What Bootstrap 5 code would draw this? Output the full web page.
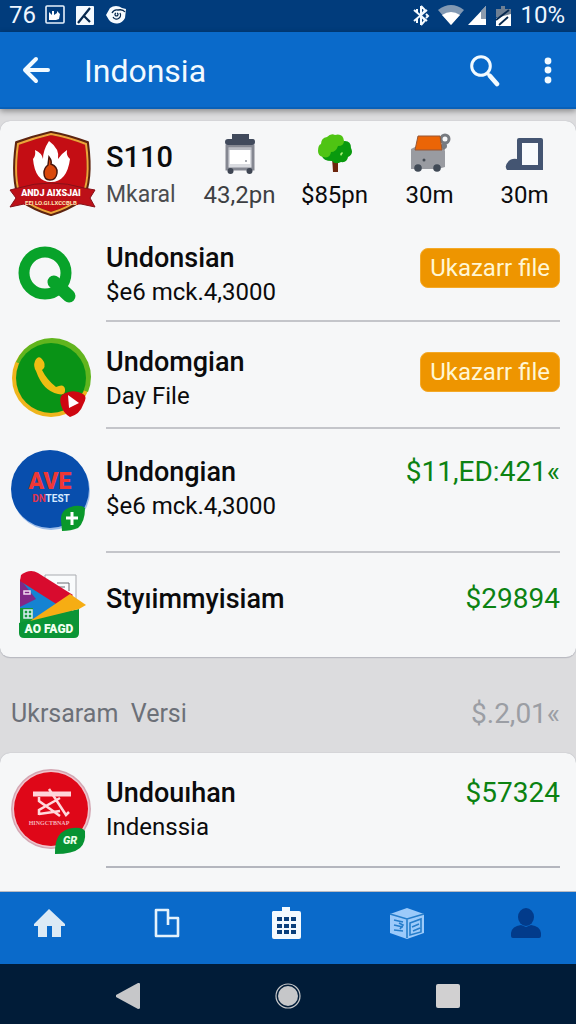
<!DOCTYPE html>
<html lang="id">
<head>
<meta charset="utf-8">
<meta name="viewport" content="width=device-width, initial-scale=1">
<title>Indonsia</title>
<link href="https://cdn.jsdelivr.net/npm/bootstrap@5.3.0/dist/css/bootstrap.min.css" rel="stylesheet">
<style>
body{font-family:Roboto,"Liberation Sans",sans-serif;background:#dcdcde;color:#0b0b0c}
svg{display:block;flex:none}
.status-bar{background:#013c7c;color:#eef6ff;height:32px;font-size:24px;line-height:28px;padding:0 11px 2px 9px}
.app-bar{background:#0a6aca;height:77px;padding:0 14px 0 20px;border-bottom:2px solid #0860b8;box-shadow:0 2px 6px rgba(0,0,0,.4);z-index:1}
.app-bar h1{font-size:32px;line-height:40px;color:#f2faff;font-weight:400;margin-left:32px;padding-top:2px}
.icon-btn{background:none;border:0;padding:0;color:#f2faff}
.panel{background:#f6f7f8;border:0;border-bottom:1px solid #babbc2;border-radius:10px;box-shadow:0 0 1px #9a9ca6}
.panel-last{border-radius:10px 10px 0 0}
.avatar-col{width:106px;flex:none;padding-left:8px}
.avatar-col svg{overflow:visible}
.summary{height:101px;padding-right:4px}
.summary-text{width:86px;flex:none;padding-top:16px}
.stat{font-size:24px;line-height:32px;padding-top:11px}
.stat-soft{color:#3d3f43}
.amount-id{font-size:29px;line-height:40px;font-weight:500}
.sub-id{font-size:23px;line-height:36px;color:#4c4d50}
.entry-body{margin-right:16px;border-bottom:2px solid #c4c5ca}
.entry:last-child .entry-body{border-bottom:0}
.short-row{height:100px}.mid-row{height:107px}.tall-row{height:124px}.end-row{height:104px}.last-row{height:115px}
.short-row .entry-body{padding-top:19px}
.mid-row .entry-body{padding-top:23px}
.tall-row .entry-body{padding-top:26px}
.end-row .entry-body{padding-top:29px}
.panel-last .last-row .entry-body{padding-top:23px;border-bottom:2px solid #b4b6be}
.entry-name{font-size:27px;line-height:34px;font-weight:500}
.entry-sub{font-size:24px;line-height:34px}
.price{font-size:28px;line-height:34px;color:#0c8212}
.file-btn{background:#ee9500;color:#fff6d4;border:1px solid #f4a928;border-radius:8px;font-size:24px;line-height:36px;padding:1px 9px;margin-top:7px}
.file-btn:hover{background:#dc8a00;color:#fff6d4}
.section-label{height:95px;padding:16px 16px 0 11px;font-size:25px;line-height:34px;color:#6c7078}
.muted-price{font-size:28px;color:#9b9ea4}
.tab-bar{background:#0a6aca;height:72px;padding:0 26px 10px}
.sys-bar{background:#011c38;height:60px;padding:4px 48px 0}
</style>
</head>
<body>
<div class="d-flex flex-column min-vh-100">
<div class="status-bar d-flex align-items-center">
  <span>76</span>
  <svg class="ms-2" width="24" height="22" viewBox="0 0 24 22"><rect x="2" y="2" width="18" height="17" rx="1" fill="none" stroke="#e6f1fb" stroke-width="1.6"/><path d="M5 8l3 3V7h2v4l3-2V7l3 3-1 5-3 1H5z" fill="#fff"/></svg>
  <svg class="ms-2 me-1" width="18" height="19" viewBox="0 0 18 19"><rect width="18" height="19" rx="1" fill="#f4faff"/><path d="M2 17L14 2M8 10l6 6" stroke="#06284e" stroke-width="2.2" fill="none"/></svg>
  <svg class="ms-2" width="20" height="20" viewBox="0 0 20 20"><path d="M0 10L4 3a10 10 0 0 1 12 0l4 1-1 9a9.5 9.5 0 0 1-16 2z" fill="#f6fbff"/><path d="M6 8q2-4 6-3 5-1 7 2M7 12a4 4 0 0 0 7-4M10 8a1.500 1.500 0 1 0 1 0" fill="none" stroke="#06284e" stroke-width="1.300"/></svg>
  <svg class="ms-auto" width="18" height="21" viewBox="0 0 18 21"><path d="M2 5l13 11M2 16L15 5M9 1v19M9 1l4 4-4 5.500 4 5L9 20M5 4v3M5 14v4M14 9l2 2-2 2" fill="none" stroke="#f4faff" stroke-width="2"/></svg>
  <svg class="ms-2 ps-0" width="26" height="20" viewBox="0 0 26 20"><path d="M0 5q13-10 26 0L13 20z" fill="#8299b3"/><path d="M4 10q9-6 18 0l-9 10z" fill="#fff"/></svg>
  <svg class="ms-1" width="19" height="20" viewBox="0 0 19 20"><path d="M0 20L18 1v19z" fill="#fff"/><path d="M13 6l5-5v13h-5z" fill="#8d9cae"/></svg>
  <svg class="ms-2 me-2" width="17" height="21" viewBox="0 0 17 21"><path d="M1 4h5V1h4v3h6v8H1z" fill="#6e7f93"/><path d="M1 13L16 9v12H1z" fill="#fff"/><path d="M1 15L14 5M4 20l9-8" stroke="#06284e" stroke-width="1.800"/></svg>
  <span>10%</span>
</div>
<header class="app-bar d-flex align-items-center position-relative">
  <button class="icon-btn" aria-label="Kembali"><svg width="32" height="32" viewBox="0 0 32 32"><path d="M28 16H5M16 5L5 16l11 11" fill="none" stroke="currentColor" stroke-width="4" stroke-linecap="round" stroke-linejoin="round"/></svg></button>
  <h1 class="mb-0">Indonsia</h1>
  <button class="icon-btn ms-auto" aria-label="Cari"><svg width="32" height="34" viewBox="0 0 32 34"><circle cx="11" cy="13" r="9.300" fill="none" stroke="currentColor" stroke-width="3"/><path d="M17 20l3 3" stroke="currentColor" stroke-width="3"/><path d="M20 23l7 8" stroke="currentColor" stroke-width="4.600" stroke-linecap="round"/></svg></button>
  <button class="icon-btn ms-4 ps-2" aria-label="Menu"><svg width="28" height="32" viewBox="0 0 28 32"><g fill="currentColor"><circle cx="14" cy="7" r="3.400"/><circle cx="14" cy="16" r="3.400"/><circle cx="14" cy="26" r="3.400"/></g></svg></button>
</header>
<main class="flex-grow-1 d-flex flex-column pt-2">
<section class="panel mt-1">
  <div class="summary d-flex">
    <div class="avatar-col pt-2"><svg width="90" height="88" viewBox="0 0 90 88"><path d="M43 4Q60 7 79 14Q84 52 74 70Q60 80 43 85Q26 80 12 70Q4 50 9 14Q26 8 43 4z" fill="#c40d14" stroke="#5d2410" stroke-width="4"/><path d="M43 5Q60 8 78 15Q83 52 73 69Q60 79 43 84Q26 79 13 69Q5 50 10 15Q26 9 43 5z" fill="none" stroke="#eea43a" stroke-width="2"/><path d="M41 12q11 8 9 18 3-5 9-9-1 6 3 9-3 23-19 23T25 30q3-3 2-9 7 3 8 9 0-9 6-18z" fill="#fff"/><path d="M41 28q3 4 2 7 7 3 6 9-1 7-7 7t-6-7q0-5 4-8z" fill="#d9480c" stroke="#49150b" stroke-width="1.500"/><path d="M2 61l8-2q33-10 66 0l11 2-5 8 5 9-14-3H16L2 78l6-9z" fill="#bd1018" stroke="#861018"/><path d="M15 70h56l-1 6H16z" fill="#bd1018"/><text x="43" y="67" text-anchor="middle" font-size="9" font-weight="900" fill="#fff">ANDJ AIXSJAI</text><text x="43" y="76" text-anchor="middle" font-size="6" font-weight="700" fill="#ffe6b0">EEI LO.GI.LXCCBLB</text></svg></div>
    <div class="summary-text"><div class="amount-id">S110</div><div class="sub-id">Mkaral</div></div>
    <div class="row row-cols-4 g-0 flex-grow-1 text-center">
      <div class="col stat d-flex flex-column align-items-center"><svg class="mb-1" width="32" height="43" viewBox="0 0 32 43"><path d="M3 14h26v23H3z" fill="#d9dbe0" stroke="#858892" stroke-width="3"/><path d="M6 18h20v14H6z" fill="#fff"/><path d="M4 17h24" stroke="#9c9fa8"/><circle cx="22" cy="29" r="1" fill="#8d929b"/><path d="M8 2h17v5h4q2 0 2 3t-3 3H4q-3 0-3-3t3-3h4z" fill="#414a5c"/><circle cx="6.500" cy="39" r="3" fill="#3f4653"/><circle cx="25.500" cy="39" r="3" fill="#3f4653"/></svg><span class="stat-soft">43,2pn</span></div>
      <div class="col stat d-flex flex-column align-items-center"><svg class="mb-1" width="36" height="43" viewBox="0 0 36 43"><path d="M15 25h6v15h-5z" fill="#6d260d"/><path d="M28 9q6 0 6 7 3 6-3 9-1 6-7 5-6 3-9-1-9 0-10-5 4-14 23-15z" fill="#099a0e"/><path d="M1 19q0-6 3-7 0-6 6-7 4-4 8-2 8-2 9 6 0 5-6 5-2 6-7 6-1 7-8 5-5-1-5-6z" fill="#4fc413"/><path d="M23 22l2-2 1 1-2 3z" fill="#a9f177"/></svg>$85pn</div>
      <div class="col stat d-flex flex-column align-items-center"><svg class="mb-1" width="44" height="43" viewBox="0 0 44 43"><path d="M36 13l-3 10" stroke="#73767c" stroke-width="4"/><circle cx="37" cy="7" r="4" fill="none" stroke="#777b81" stroke-width="3"/><circle cx="36" cy="14" r="3" fill="#777b81"/><path d="M3 17l4-2 27 1 3 3v16l-7 2H3z" fill="#999ba1"/><path d="M10 4h22l2 14H7z" fill="#eb6506" stroke="#965736"/><circle cx="16" cy="28" r="1.500" fill="#444a53"/><circle cx="10" cy="36" r="3.800" fill="#414a56"/><circle cx="29" cy="36" r="3.800" fill="#414a56"/></svg>30m</div>
      <div class="col stat d-flex flex-column align-items-center"><svg class="mb-1" width="40" height="43" viewBox="0 0 40 43"><path d="M14 6h22q2 0 2 2v30H2q-3-4 1-8 3-4 9-3V8q0-2 2-2z" fill="#445572"/><path d="M17 11h16v22H17z" fill="#f8fbfd"/></svg>30m</div>
    </div>
  </div>
  <div class="entry d-flex short-row">
    <div class="avatar-col d-flex align-items-center"><svg width="80" height="80" viewBox="0 0 80 80"><circle cx="37" cy="41" r="21" fill="none" stroke="#08a32a" stroke-width="11"/><path d="M46 50l15 14" stroke="#08a32a" stroke-width="13" stroke-linecap="round"/></svg></div>
    <div class="entry-body flex-grow-1 d-flex justify-content-between align-items-start"><div><div class="entry-name">Undonsian</div><div class="entry-sub">$e6 mck.4,3000</div></div><button class="btn file-btn">Ukazarr file</button></div>
  </div>
  <div class="entry d-flex mid-row">
    <div class="avatar-col d-flex align-items-center"><svg width="86" height="82" viewBox="0 0 86 82"><circle cx="43" cy="43" r="39" fill="#efb51d"/><path d="M8 27A39 39 0 1 1 80 57L43 43z" fill="#61b51e"/><circle cx="43" cy="43" r="35" fill="#099316"/><path d="M27 26q4-8 9 1 2 5-2 8 5 10 14 17 8-4 9 2 1 7-7 5-15-3-22-23-3-5-1-10z" fill="#efbd13"/><path d="M54 60q11-7 21-1 5 2 0 11-3 9-13 12-7-4-9-12-2-7 1-10z" fill="#ce0711"/><path d="M60 60l11 8-10 5z" fill="#fff"/></svg></div>
    <div class="entry-body flex-grow-1 d-flex justify-content-between align-items-start"><div><div class="entry-name">Undomgian</div><div class="entry-sub">Day File</div></div><button class="btn file-btn">Ukazarr file</button></div>
  </div>
  <div class="entry d-flex tall-row">
    <div class="avatar-col d-flex align-items-center"><svg width="86" height="86" viewBox="0 0 86 86"><circle cx="43" cy="43" r="39" fill="#9cbce9"/><circle cx="42" cy="41" r="39" fill="#084ead"/><text x="42" y="41" text-anchor="middle" font-family="Roboto" font-size="23" font-weight="900" fill="#ed3835">AVE</text><text x="43" y="54" text-anchor="middle" font-family="Roboto" font-size="10" font-weight="700" fill="#d7e9ff"><tspan fill="#e23450">DN</tspan>TEST</text><path d="M77 60q-3-3-11-2-14 3-13 14l1 11q9 0 16-3 7-6 7-20z" fill="#0a982b"/><path d="M64 64v13M58 70h12" stroke="#fff" stroke-width="3"/></svg></div>
    <div class="entry-body flex-grow-1 d-flex justify-content-between align-items-start"><div><div class="entry-name">Undongian</div><div class="entry-sub">$e6 mck.4,3000</div></div><span class="price">$11,ED:421«</span></div>
  </div>
  <div class="entry d-flex end-row">
    <div class="avatar-col d-flex align-items-center"><svg width="80" height="68" viewBox="0 0 80 68"><path d="M37 4h31v32H37z" fill="#f9fbfc" stroke="#a9abb0"/><path d="M49 12h12v8M51 16h6" fill="none" stroke="#686b70"/><path d="M12 10l52 20v12L24 54 12 45z" fill="#1583d2"/><path d="M12 8l16 20-16 8z" fill="#812887"/><path d="M12 37h13v20H12z" fill="#139a38"/><path d="M71 38v24q0 5-5 5H16q-5 0-5-5V52l14-4z" fill="#0b9536"/><path d="M13 4Q22-3 30 2l35 22-12 12L12 10z" fill="#d80b2e"/><path d="M62 23l16 11-7 4-49 12z" fill="#f6ad13"/><path d="M16 20h6v3h-6z" fill="none" stroke="#f1d9f0" stroke-width="1.500"/><path d="M16 39h8v8h-8zM20 39v8M16 43h8" fill="none" stroke="#d9edf1" stroke-width="1.500"/><text x="41" y="62" text-anchor="middle" font-family="Roboto" font-size="12" font-weight="900" fill="#f2fff1">AO FAGD</text></svg></div>
    <div class="entry-body flex-grow-1 d-flex justify-content-between align-items-start"><div class="entry-name">Styıimmyisiam</div><span class="price">$29894</span></div>
  </div>
</section>
<div class="section-label d-flex justify-content-between align-items-center pt-3"><span>Ukrsaram&nbsp; Versi</span><span class="muted-price">$.2,01«</span></div>
<section class="panel panel-last flex-grow-1">
  <div class="entry d-flex last-row">
    <div class="avatar-col d-flex align-items-center"><svg width="86" height="88" viewBox="0 0 86 88"><circle cx="43" cy="42" r="40" fill="#d3a7b3"/><circle cx="43" cy="42" r="38.500" fill="#f0c5cd"/><circle cx="43" cy="42" r="37" fill="#df0718"/><path d="M25 27h38" stroke="#ffd5da" stroke-width="5"/><path d="M31 30v4l21 15M52 31L31 43v5M41 22l17 26 3-3M31 47l21-3" fill="none" stroke="#ffd9dc" stroke-width="2.500"/><text x="41" y="58" text-anchor="middle" font-family="Liberation Serif" font-size="6" font-weight="700" fill="#f4b2ba">HINGCTBNAP</text><path d="M77 64q-3-4-12-3-19 2-18 26 18 0 25-6 6-5 5-17z" fill="#079333"/><text x="62" y="77" text-anchor="middle" font-family="Roboto" font-size="11" font-style="italic" font-weight="900" fill="#e8ffe8">GR</text></svg></div>
    <div class="entry-body flex-grow-1 d-flex justify-content-between align-items-start"><div><div class="entry-name">Undouıhan</div><div class="entry-sub">Indenssia</div></div><span class="price">$57324</span></div>
  </div>
</section>
</main>
<nav class="tab-bar d-flex justify-content-between align-items-center" aria-label="Tab">
  <a href="#" class="ps-1" aria-label="Beranda"><svg width="36" height="32" viewBox="0 0 36 32"><path d="M19 2L4 17v2h4v11h9V19h5v11h9V19h4v-2z" fill="#dceaf5"/></svg></a>
  <a href="#" aria-label="Dokumen"><svg width="34" height="32" viewBox="0 0 34 32"><path d="M6 3h11v8h10v18H5V3zM17 10v8" fill="none" stroke="#e4f2fc" stroke-width="2.600" stroke-linejoin="round"/></svg></a>
  <a href="#" aria-label="Kalender"><svg width="34" height="36" viewBox="0 0 34 36"><path d="M4 6h9V2h8v4h9q2 0 2 2v24q0 2-2 2H5q-2 0-2-2V7z" fill="#f4faff"/><path d="M8 12h5v4H8zM15 12h5v4h-5zM22 12h5v4h-5zM8 19h5v4H8zM15 19h5v4h-5zM22 19h5v4h-5zM8 25h5v4H8zM15 25h5v4h-5zM22 25h5v4h-5z" fill="#0a3f7c"/></svg></a>
  <a href="#" aria-label="Paket"><svg width="38" height="34" viewBox="0 0 38 34"><path d="M2 8l17-6 17 6v19l-17 6L2 27z" fill="#9ccafa"/><path d="M2 8l17 5 17-5M19 13v19M22 17l11-4v13l-11 3zM24 21l7-3M25 25l7-3M6 14l9 2M6 19l9 2M6 24l9 1M11 17l4 2-3 4" fill="none" stroke="#257dcb" stroke-width="1.600"/></svg></a>
  <a href="#" class="pe-2" aria-label="Profil"><svg width="32" height="34" viewBox="0 0 32 34"><ellipse cx="16" cy="11" rx="8" ry="9" fill="#023b8b"/><path d="M1 30v-3q1-7 10-8l5 2 5-2q9 1 10 8v3q0 2-2 2H3q-2 0-2-2z" fill="#023b8b"/></svg></a>
</nav>
<div class="sys-bar d-flex justify-content-around align-items-center">
  <button class="icon-btn" aria-label="Mundur"><svg width="28" height="28" viewBox="0 0 28 28"><path d="M25 1q1 0 1 1v24q0 1-2 1L2 15v-2L24 1z" fill="#c6c7c9"/></svg></button>
  <button class="icon-btn" aria-label="Layar utama"><svg width="28" height="28" viewBox="0 0 28 28"><circle cx="14" cy="14" r="12" fill="none" stroke="#c6c7c9" stroke-width="1.200"/><circle cx="14" cy="14" r="10" fill="#c6c7c9"/></svg></button>
  <button class="icon-btn" aria-label="Aplikasi terbaru"><svg width="28" height="28" viewBox="0 0 28 28"><rect x="2" y="2" width="24" height="24" rx="2" fill="#d1d0d1"/></svg></button>
</div>
</div>
<script src="https://cdn.jsdelivr.net/npm/bootstrap@5.3.0/dist/js/bootstrap.bundle.min.js"></script>
</body>
</html>
